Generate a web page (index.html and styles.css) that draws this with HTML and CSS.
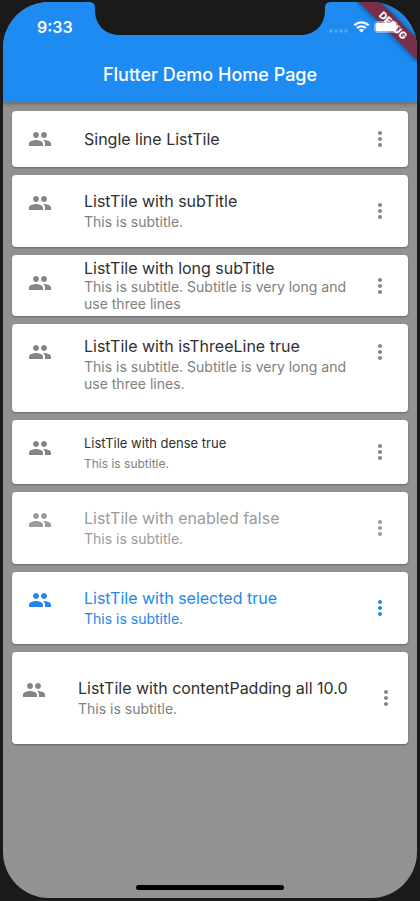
FILE: index.html
```html
<!DOCTYPE html>
<html lang="en">
<head>
<meta charset="utf-8">
<meta name="viewport" content="width=device-width, initial-scale=1">
<title>Flutter Demo Home Page</title>
<link rel="stylesheet" href="styles.css">
</head>
<body>
<svg class="symbols" aria-hidden="true">
  <symbol id="people" viewBox="0 0 24 24"><path d="M16 11c1.66 0 2.99-1.34 2.99-3S17.66 5 16 5c-1.66 0-3 1.34-3 3s1.34 3 3 3zm-8 0c1.66 0 2.99-1.34 2.99-3S9.66 5 8 5C6.34 5 5 6.34 5 8s1.34 3 3 3zm0 2c-2.33 0-7 1.17-7 3.5V19h14v-2.5c0-2.33-4.67-3.5-7-3.5zm8 0c-.29 0-.62.02-.97.05 1.16.84 1.97 1.97 1.97 3.45V19h6v-2.500c0-2.33-4.67-3.500-7-3.500z"/></symbol>
  <symbol id="more" viewBox="0 0 24 24"><path d="M12 8c1.100 0 2-.9 2-2s-.9-2-2-2-2 .9-2 2 .9 2 2 2zm0 2c-1.100 0-2 .9-2 2s.9 2 2 2 2-.9 2-2-.9-2-2-2zm0 6c-1.100 0-2 .9-2 2s.9 2 2 2 2-.9 2-2-.9-2-2-2z"/></symbol>
</svg>
<div class="screen">
  <header class="app-bar">
    <div class="status">
      <span class="time">9:33</span>
      <div class="indicators">
        <svg class="signal" viewBox="0 0 20 4" aria-hidden="true"><circle cx="2" cy="2" r="1.800"/><circle cx="7" cy="2" r="1.800"/><circle cx="12" cy="2" r="1.800"/><circle cx="17" cy="2" r="1.800"/></svg>
        <svg class="wifi" viewBox="0 0 16 12" aria-hidden="true"><path d="M8 2.300c2.200 0 4.200.85 5.700 2.250.1.100.3.100.4 0l1.100-1.100a.3.300 0 0 0 0-.45A10.400 10.400 0 0 0 8 .1 10.400 10.400 0 0 0 .8 3a.3.300 0 0 0 0 .45l1.100 1.100c.1.100.3.100.4 0A8.300 8.300 0 0 1 8 2.300zm0 3.700c1.200 0 2.300.45 3.200 1.200.1.100.3.100.4 0l1.100-1.100a.3.300 0 0 0 0-.45A6.900 6.900 0 0 0 8 3.800c-1.800 0-3.400.7-4.700 1.850a.3.300 0 0 0 0 .45l1.100 1.100c.1.100.3.100.4 0A4.900 4.900 0 0 1 8 6zm2.200 2.600a.3.300 0 0 0 0-.45 3.400 3.400 0 0 0-4.400 0 .3.300 0 0 0 0 .45l1.950 1.950c.15.150.35.150.5 0z"/></svg>
        <svg class="battery" viewBox="0 0 28 12" aria-hidden="true"><rect class="battery-case" x=".5" y=".5" width="23" height="11" rx="3"/><rect x="1.500" y="1.500" width="21" height="9" rx="2"/><path class="battery-cap" d="M25 4v4c1-.4 1.500-1.100 1.500-2S26 4.400 25 4z"/></svg>
      </div>
    </div>
    <h1>Flutter Demo Home Page</h1>
  </header>
  <main>
    <ul class="list">
      <li class="tile single">
        <svg class="icon"><use href="#people"/></svg>
        <div class="text"><h2>Single line ListTile</h2></div>
        <button aria-label="More options"><svg class="icon"><use href="#more"/></svg></button>
      </li>
      <li class="tile">
        <svg class="icon"><use href="#people"/></svg>
        <div class="text"><h2>ListTile with subTitle</h2><p>This is subtitle.</p></div>
        <button aria-label="More options"><svg class="icon"><use href="#more"/></svg></button>
      </li>
      <li class="tile long">
        <svg class="icon"><use href="#people"/></svg>
        <div class="text"><h2>ListTile with long subTitle</h2><p>This is subtitle. Subtitle is very long and use three lines</p></div>
        <button aria-label="More options"><svg class="icon"><use href="#more"/></svg></button>
      </li>
      <li class="tile three-line">
        <svg class="icon"><use href="#people"/></svg>
        <div class="text"><h2>ListTile with isThreeLine true</h2><p>This is subtitle. Subtitle is very long and use three lines.</p></div>
        <button aria-label="More options"><svg class="icon"><use href="#more"/></svg></button>
      </li>
      <li class="tile dense">
        <svg class="icon"><use href="#people"/></svg>
        <div class="text"><h2>ListTile with dense true</h2><p>This is subtitle.</p></div>
        <button aria-label="More options"><svg class="icon"><use href="#more"/></svg></button>
      </li>
      <li class="tile disabled">
        <svg class="icon"><use href="#people"/></svg>
        <div class="text"><h2>ListTile with enabled false</h2><p>This is subtitle.</p></div>
        <button aria-label="More options" disabled><svg class="icon"><use href="#more"/></svg></button>
      </li>
      <li class="tile selected">
        <svg class="icon"><use href="#people"/></svg>
        <div class="text"><h2>ListTile with selected true</h2><p>This is subtitle.</p></div>
        <button aria-label="More options"><svg class="icon"><use href="#more"/></svg></button>
      </li>
      <li class="tile padded">
        <svg class="icon"><use href="#people"/></svg>
        <div class="text"><h2>ListTile with contentPadding all 10.0</h2><p>This is subtitle.</p></div>
        <button aria-label="More options"><svg class="icon"><use href="#more"/></svg></button>
      </li>
    </ul>
  </main>
  <svg class="notch" viewBox="0 0 242 34" aria-hidden="true"><path d="M0 0c4 0 6 2 6 6v2c0 15 10 25 25 25h180c15 0 25-10 25-25V6c0-4 2-6 6-6z"/></svg>
  <div class="debug"><span>DEBUG</span></div>
  <div class="home-bar"></div>
</div>
</body>
</html>
```
FILE: styles.css
```css
* {
  box-sizing: border-box;
  margin: 0;
  padding: 0;
}

body {
  min-height: 100vh;
  display: flex;
  padding: 2px 3px 3px;
  background: #1a1a1a;
  font-family: Inter, Roboto, sans-serif;
}

svg {
  display: block;
  fill: currentColor;
}

.symbols {
  position: absolute;
  width: 0;
  height: 0;
}

.screen {
  position: relative;
  flex: 1;
  min-width: 0;
  overflow: hidden;
  border-radius: 46px;
  background: #929292;
}

.app-bar {
  position: relative;
  height: 100px;
  background: #1e8bf2;
  color: #fff;
  box-shadow: 0 1px 5px rgba(0, 0, 0, 0.4);
}

/* The status bar is drawn by the system, above the debug ribbon. */
.status {
  position: relative;
  z-index: 1;
  display: flex;
  justify-content: space-between;
  align-items: center;
  height: 44px;
  padding: 6px 15px 0 34px;
}

.time {
  font-size: 16px;
  font-weight: 600;
}

.indicators {
  display: flex;
  align-items: center;
  gap: 4px;
}

.signal {
  width: 20px;
  height: 4px;
  margin-top: 8px;
  opacity: 0.25;
}

.wifi {
  width: 17px;
  height: 13px;
}

.battery {
  width: 28px;
  height: 12px;
}

.battery-case {
  fill: none;
  stroke: currentColor;
  opacity: 0.4;
}

.battery-cap {
  opacity: 0.4;
}

h1 {
  line-height: 58px;
  font-size: 18px;
  font-weight: 500;
  text-align: center;
}

.list {
  display: flex;
  flex-direction: column;
  gap: 8px;
  padding: 9px;
  list-style: none;
}

.tile {
  display: flex;
  align-items: flex-start;
  min-height: 72px;
  padding: 0 16px;
  border-radius: 4px;
  background: #fff;
  color: #858585;
  box-shadow: 0 1px 2px rgba(0, 0, 0, 0.3);
}

.icon {
  flex: none;
  width: 24px;
  height: 24px;
}

.tile > .icon {
  margin-top: 16px;
}

.text {
  flex: 1;
  min-width: 0;
  padding-top: 16px;
  margin-left: 32px;
}

h2 {
  color: #303030;
  font-size: 16px;
  font-weight: 400;
  line-height: 20px;
}

p {
  margin-top: 2px;
  color: #808080;
  font-size: 14px;
  line-height: 17px;
}

button {
  align-self: center;
  border: 0;
  background: none;
  color: inherit;
}

.single {
  min-height: 56px;
}

.single .text {
  padding-top: 18px;
}

.long {
  min-height: 0;
}

.long .text {
  padding: 3px 0 4px;
}

.long p {
  margin-top: 0;
}

.three-line {
  min-height: 88px;
}

.three-line .text {
  padding-top: 12px;
}

.three-line button {
  align-self: flex-start;
  margin-top: 16px;
}

.dense {
  min-height: 64px;
}

.dense .text {
  padding-top: 13px;
}

.dense h2 {
  font-size: 13px;
}

.dense p {
  font-size: 12px;
}

.disabled,
.disabled h2,
.disabled p {
  color: #9b9b9b;
}

.selected,
.selected h2,
.selected p {
  color: #2189ec;
}

.padded {
  min-height: 92px;
  padding: 10px;
}

.notch {
  position: absolute;
  top: 0;
  left: 50%;
  width: 242px;
  height: 34px;
  transform: translateX(-50%);
  color: #1a1a1a;
}

.debug {
  position: absolute;
  top: 0;
  right: 0;
  width: 60px;
  height: 60px;
  overflow: hidden;
}

.debug span {
  position: absolute;
  top: 16px;
  left: -14px;
  width: 100px;
  height: 15px;
  background: #792d4b;
  color: #fff;
  box-shadow: 0 0 6px rgba(0, 0, 0, 0.5);
  font-size: 10px;
  font-weight: 800;
  line-height: 15px;
  text-align: center;
  transform: rotate(45deg);
}

.home-bar {
  position: absolute;
  bottom: 8px;
  left: 50%;
  width: 148px;
  height: 5px;
  border-radius: 3px;
  background: #000;
  transform: translateX(-50%);
}
```
